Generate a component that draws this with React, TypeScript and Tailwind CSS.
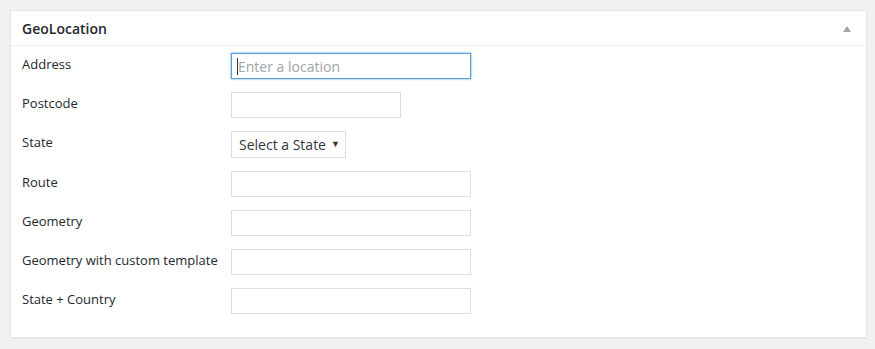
import React from "react"

const fields = [
  { label: "Postcode", width: "w-[170px]" },
]

const wideFields = ["Route", "Geometry", "Geometry with custom template", "State + Country"]

function Row({ label, children }: { label: string; children: React.ReactNode }) {
  return (
    <div className="flex items-start">
      <div className="w-[209px] shrink-0 pt-[1px] text-[13px] leading-[20px] text-[#23282d]">{label}</div>
      <div>{children}</div>
    </div>
  )
}

function TextBox({ width }: { width: string }) {
  return (
    <input
      type="text"
      className={`${width} h-[26px] border border-[#dddddd] bg-white px-[6px] text-[14px] text-[#32373c] outline-none`}
    />
  )
}

export default function App() {
  return (
    <div className="min-h-screen bg-[#f1f1f1] p-[10px] pr-[8px] font-['Open_Sans',sans-serif]">
      <div className="border border-[#e5e5e5] bg-white shadow-[0_1px_1px_rgba(0,0,0,0.04)]">
        <div className="flex h-[35px] items-center justify-between border-b border-[#eeeeee] pl-[11px] pr-[15px]">
          <h2 className="mt-[1px] text-[14px] font-semibold text-[#23282d]">GeoLocation</h2>
          <svg width="8" height="6" viewBox="0 0 8 6" className="mt-[1px]">
            <polygon points="4,0 8,6 0,6" fill="#a0a5aa" />
          </svg>
        </div>

        <div className="flex flex-col gap-[13px] px-[11px] pb-[23px] pt-[7px]">
          <Row label="Address">
            <div className="relative">
              <input
                type="text"
                placeholder="Enter a location"
                className="h-[26px] w-[240px] border border-[#5b9dd9] bg-white px-[6px] pt-[1px] text-[14px] text-[#32373c] shadow-[0_0_2px_rgba(30,140,190,0.8)] outline-none placeholder:text-[#a0a5aa]"
              />
              <span className="pointer-events-none absolute left-[6px] top-[5px] h-[17px] w-px bg-[#32373c]" />
            </div>
          </Row>

          {fields.map((f) => (
            <Row key={f.label} label={f.label}>
              <TextBox width={f.width} />
            </Row>
          ))}

          <Row label="State">
            <div className="relative w-[115px]">
              <select className="h-[27px] w-[115px] appearance-none border border-[#dddddd] bg-white pl-[7px] text-[14px] text-[#32373c] outline-none">
                <option>Select a State</option>
              </select>
              <span className="pointer-events-none absolute right-[6px] top-[6px] text-[9px] leading-[14px] text-[#32373c]">▼</span>
            </div>
          </Row>

          {wideFields.map((label) => (
            <Row key={label} label={label}>
              <TextBox width="w-[240px]" />
            </Row>
          ))}
        </div>
      </div>
    </div>
  )
}
